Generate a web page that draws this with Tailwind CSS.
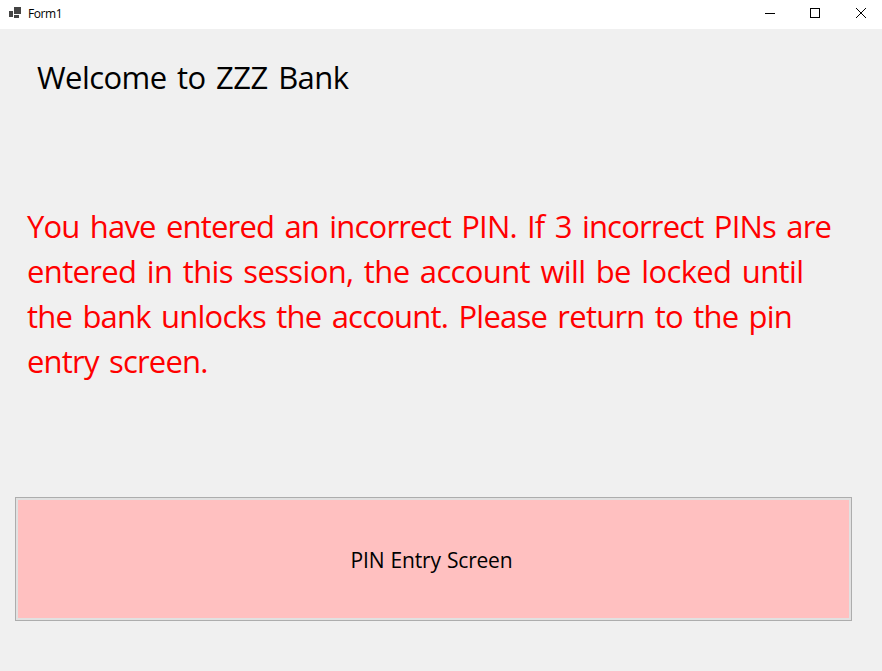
<!DOCTYPE html>
<html lang="en"><head><meta charset="utf-8"><title>Form1</title>
<script src="https://cdn.jsdelivr.net/npm/@tailwindcss/browser@4"></script></head>
<body class="w-[882px] h-[671px] overflow-hidden bg-[#f0f0f0] font-['Open_Sans','Noto_Sans',sans-serif] text-black flex flex-col">
<header class="h-[29px] shrink-0 bg-white flex items-start justify-between">
<div class="flex pl-[9px]">
<svg class="mt-[7px]" width="13" height="12" viewBox="0 0 13 12" shape-rendering="crispEdges"><path fill="#444" d="M5 0h7v7H5zM0 4h4v6H0zM5 8h5v3H5z"/></svg>
<span class="ml-[6px] text-[12px] leading-[28px] tracking-[-0.4px]">Form1</span>
</div>
<svg width="132" height="28" fill="none" stroke="#000"><path d="M15 13.500h10M60.500 8.500h9v9h-9z" shape-rendering="crispEdges"/><path d="M106 8l10 10M116 8l-10 10"/></svg>
</header>
<main class="flex-1 text-[31px] leading-[45px] whitespace-nowrap">
<h1 class="ml-[37px] mt-[26px] [word-spacing:3px] tracking-[-0.56px]">Welcome to ZZZ Bank</h1>
<p class="ml-[27px] mt-[104px] text-[#f00] [word-spacing:3px]">
<span class="block tracking-[-0.81px]">You have entered an incorrect PIN. If 3 incorrect PINs are</span>
<span class="block tracking-[-0.64px]">entered in this session, the account will be locked until</span>
<span class="block tracking-[-0.78px]">the bank unlocks the account. Please return to the pin</span>
<span class="block tracking-[-0.8px]">entry screen.</span></p>
<button class="block ml-[15px] mt-[113px] w-[837px] h-[124px] border border-[#adadad] bg-[#ffc0c0] shadow-[inset_0_0_0_2px_#e1e1e1] text-[21px] leading-[30px] pt-px pr-[4px] tracking-[-0.2px] [word-spacing:1px]">PIN Entry Screen</button>
</main></body></html>
